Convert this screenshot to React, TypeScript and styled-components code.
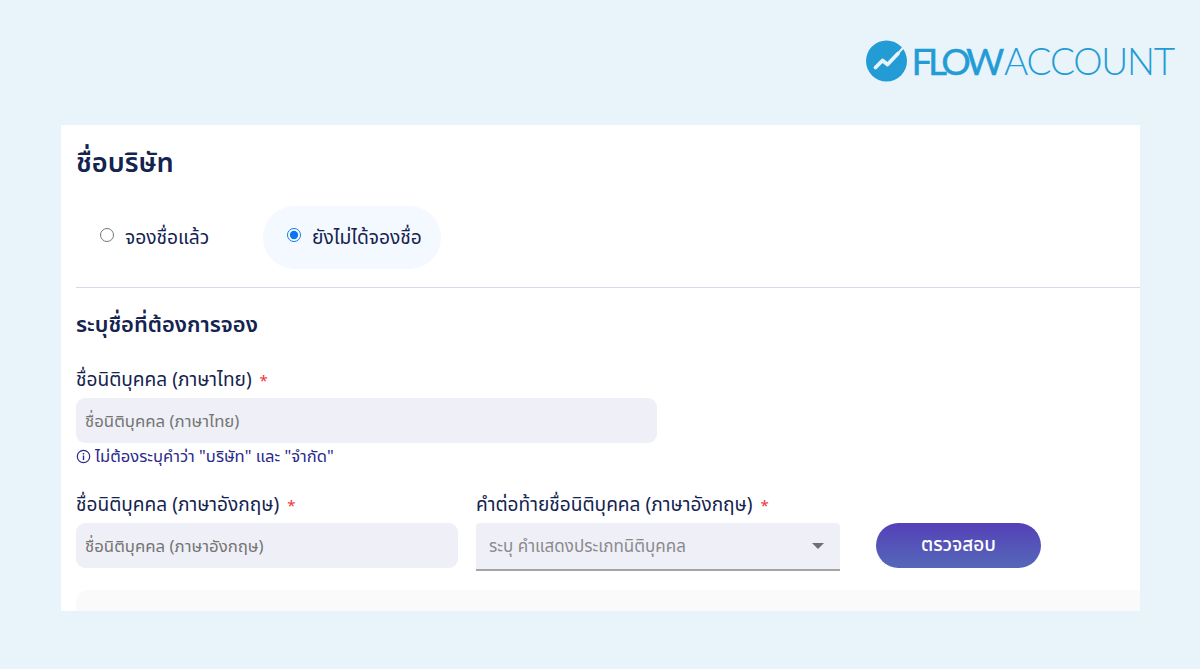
import * as React from 'react';
import styled, { createGlobalStyle } from 'styled-components';

const GlobalStyle = createGlobalStyle`
  html, body {
    margin: 0;
    height: 100%;
    overflow: hidden;
    background: #e8f3fa;
    font-family: 'Noto Sans', 'Noto Sans Thai', 'Liberation Sans', sans-serif;
  }
`;

const Page = styled.div`
  height: 669px;
  padding: 40px 25px 0 61px;
  box-sizing: border-box;
  display: flex;
  flex-direction: column;
`;

const LogoRow = styled.header`
  display: flex;
  justify-content: flex-end;
  align-items: center;
  gap: 4px;
  height: 42px;
  padding-right: 1px;
  margin-bottom: 43px;
`;

const LogoWord = styled.div`
  font-family: 'Lato', sans-serif;
  font-size: 37px;
  line-height: 42px;
  color: #239cd6;
  white-space: nowrap;
`;

const LogoBold = styled.span`
  font-weight: 400;
  letter-spacing: -4.4px;
  -webkit-text-stroke: 0.4px #239cd6;
  margin-right: 4px;
`;

const LogoLight = styled.span`
  font-weight: 300;
  letter-spacing: -1.2px;
`;

const Panel = styled.main`
  width: 1079px;
  height: 486px;
  background: #fff;
  padding: 19px 0 0 15px;
  box-sizing: border-box;
  overflow: hidden;
  color: #14234f;
`;

const Title = styled.h1`
  margin: 0;
  font-size: 27.2px;
  line-height: 36px;
  font-weight: 600;
`;

const RadioRow = styled.div`
  display: flex;
  margin-top: 26px;
  padding-bottom: 18px;
  border-bottom: 1px solid #d6daea;
`;

const RadioPill = styled.label<{ $active?: boolean }>`
  display: flex;
  align-items: center;
  gap: 11px;
  height: 63px;
  width: ${p => (p.$active ? '178px' : '187px')};
  box-sizing: border-box;
  padding-left: 24px;
  border-radius: 32px;
  background: ${p => (p.$active ? '#f4f8ff' : 'transparent')};
  font-size: 19.2px;
  white-space: nowrap;
`;

const RadioInput = styled.input`
  width: 14px;
  height: 14px;
  margin: -5px 0 0;
  accent-color: #0b75f0;
`;

const Heading = styled.h2`
  margin: 20px 0 0;
  font-size: 21.9px;
  line-height: 32px;
  font-weight: 600;
`;

const FieldStack = styled.div`
  margin-top: 24px;
  width: 581px;
`;

const Label = styled.div`
  font-size: 19.1px;
  line-height: 30px;
  margin-bottom: 3px;
  white-space: nowrap;
`;

const Required = styled.span`
  color: #f0323c;
  font-size: 15px;
  margin-left: 3px;
`;

const TextInput = styled.input`
  display: block;
  width: 100%;
  height: 45px;
  box-sizing: border-box;
  border: 0;
  border-radius: 9px;
  background: #eff0f7;
  padding: 0 9px;
  font: inherit;
  font-size: 16.8px;
  &::placeholder {
    color: #757575;
    opacity: 1;
  }
`;

const Hint = styled.div`
  display: flex;
  align-items: center;
  gap: 4px;
  margin-top: 2px;
  font-size: 16.6px;
  line-height: 22px;
  color: #2a2a8c;
  white-space: nowrap;
`;

const BottomRow = styled.div`
  display: flex;
  margin-top: 22px;
`;

const Column = styled.div<{ $width: number }>`
  width: ${p => p.$width}px;
  margin-right: 18px;
`;

const SelectBox = styled.div`
  display: flex;
  align-items: center;
  justify-content: space-between;
  height: 48px;
  box-sizing: border-box;
  padding: 2px 16px 0 13px;
  border-radius: 4px 4px 0 0;
  border-bottom: 2px solid #a4a4a8;
  background: #eff0f7;
  color: #8a8a8e;
  font-size: 17px;
  white-space: nowrap;
`;

const Caret = styled.span`
  width: 0;
  height: 0;
  border-left: 6px solid transparent;
  border-right: 6px solid transparent;
  border-top: 6px solid #6f6f73;
  margin-top: -2px;
`;

const CheckButton = styled.button`
  width: 165px;
  height: 45px;
  margin: 34px 0 0 18px;
  border: 0;
  border-radius: 23px;
  background: linear-gradient(180deg, #5540b8 0%, #5568b8 100%);
  color: #fff;
  font: inherit;
  font-size: 19px;
  font-weight: 500;
`;

const ResultCard = styled.section`
  height: 60px;
  margin-top: 19px;
  border-radius: 12px 0 0 0;
  background: #fafafa;
`;

const LogoMark = () => (
  <svg width="41" height="42" viewBox="0 0 41 42" aria-hidden="true">
    <circle cx="20.5" cy="21" r="20.5" fill="#239cd6" />
    <path d="M9.5 27.5 L16.5 20.5 L21.5 24.5 L32 13.5" fill="none" stroke="#e8f3fa" strokeWidth="3.8" strokeLinecap="round" strokeLinejoin="round" />
    <path d="M31 14.5 L41 3.5" fill="none" stroke="#e8f3fa" strokeWidth="2" />
  </svg>
);

const InfoIcon = () => (
  <svg width="15" height="15" viewBox="0 0 15 15" aria-hidden="true">
    <circle cx="7.5" cy="7.5" r="6.2" fill="none" stroke="#2a2a8c" strokeWidth="1.2" />
    <path d="M7.5 6.6 V11 M7.5 4 V5.4" stroke="#2a2a8c" strokeWidth="1.4" />
  </svg>
);

export default function App() {
  return (
    <>
      <GlobalStyle />
      <Page>
        <LogoRow>
          <LogoMark />
          <LogoWord>
            <LogoBold>FLOW</LogoBold>
            <LogoLight>ACCOUNT</LogoLight>
          </LogoWord>
        </LogoRow>
        <Panel>
          <Title>ชื่อบริษัท</Title>
          <RadioRow>
            <RadioPill>
              <RadioInput type="radio" name="reserved" />
              จองชื่อแล้ว
            </RadioPill>
            <RadioPill $active>
              <RadioInput type="radio" name="reserved" defaultChecked />
              ยังไม่ได้จองชื่อ
            </RadioPill>
          </RadioRow>
          <Heading>ระบุชื่อที่ต้องการจอง</Heading>
          <FieldStack>
            <Label>
              ชื่อนิติบุคคล (ภาษาไทย) <Required>*</Required>
            </Label>
            <TextInput placeholder="ชื่อนิติบุคคล (ภาษาไทย)" />
            <Hint>
              <InfoIcon />
              ไม่ต้องระบุคำว่า "บริษัท" และ "จำกัด"
            </Hint>
          </FieldStack>
          <BottomRow>
            <Column $width={382}>
              <Label>
                ชื่อนิติบุคคล (ภาษาอังกฤษ) <Required>*</Required>
              </Label>
              <TextInput placeholder="ชื่อนิติบุคคล (ภาษาอังกฤษ)" />
            </Column>
            <Column $width={364}>
              <Label>
                คำต่อท้ายชื่อนิติบุคคล (ภาษาอังกฤษ) <Required>*</Required>
              </Label>
              <SelectBox>
                ระบุ คำแสดงประเภทนิติบุคคล
                <Caret />
              </SelectBox>
            </Column>
            <CheckButton>ตรวจสอบ</CheckButton>
          </BottomRow>
          <ResultCard />
        </Panel>
      </Page>
    </>
  );
}
